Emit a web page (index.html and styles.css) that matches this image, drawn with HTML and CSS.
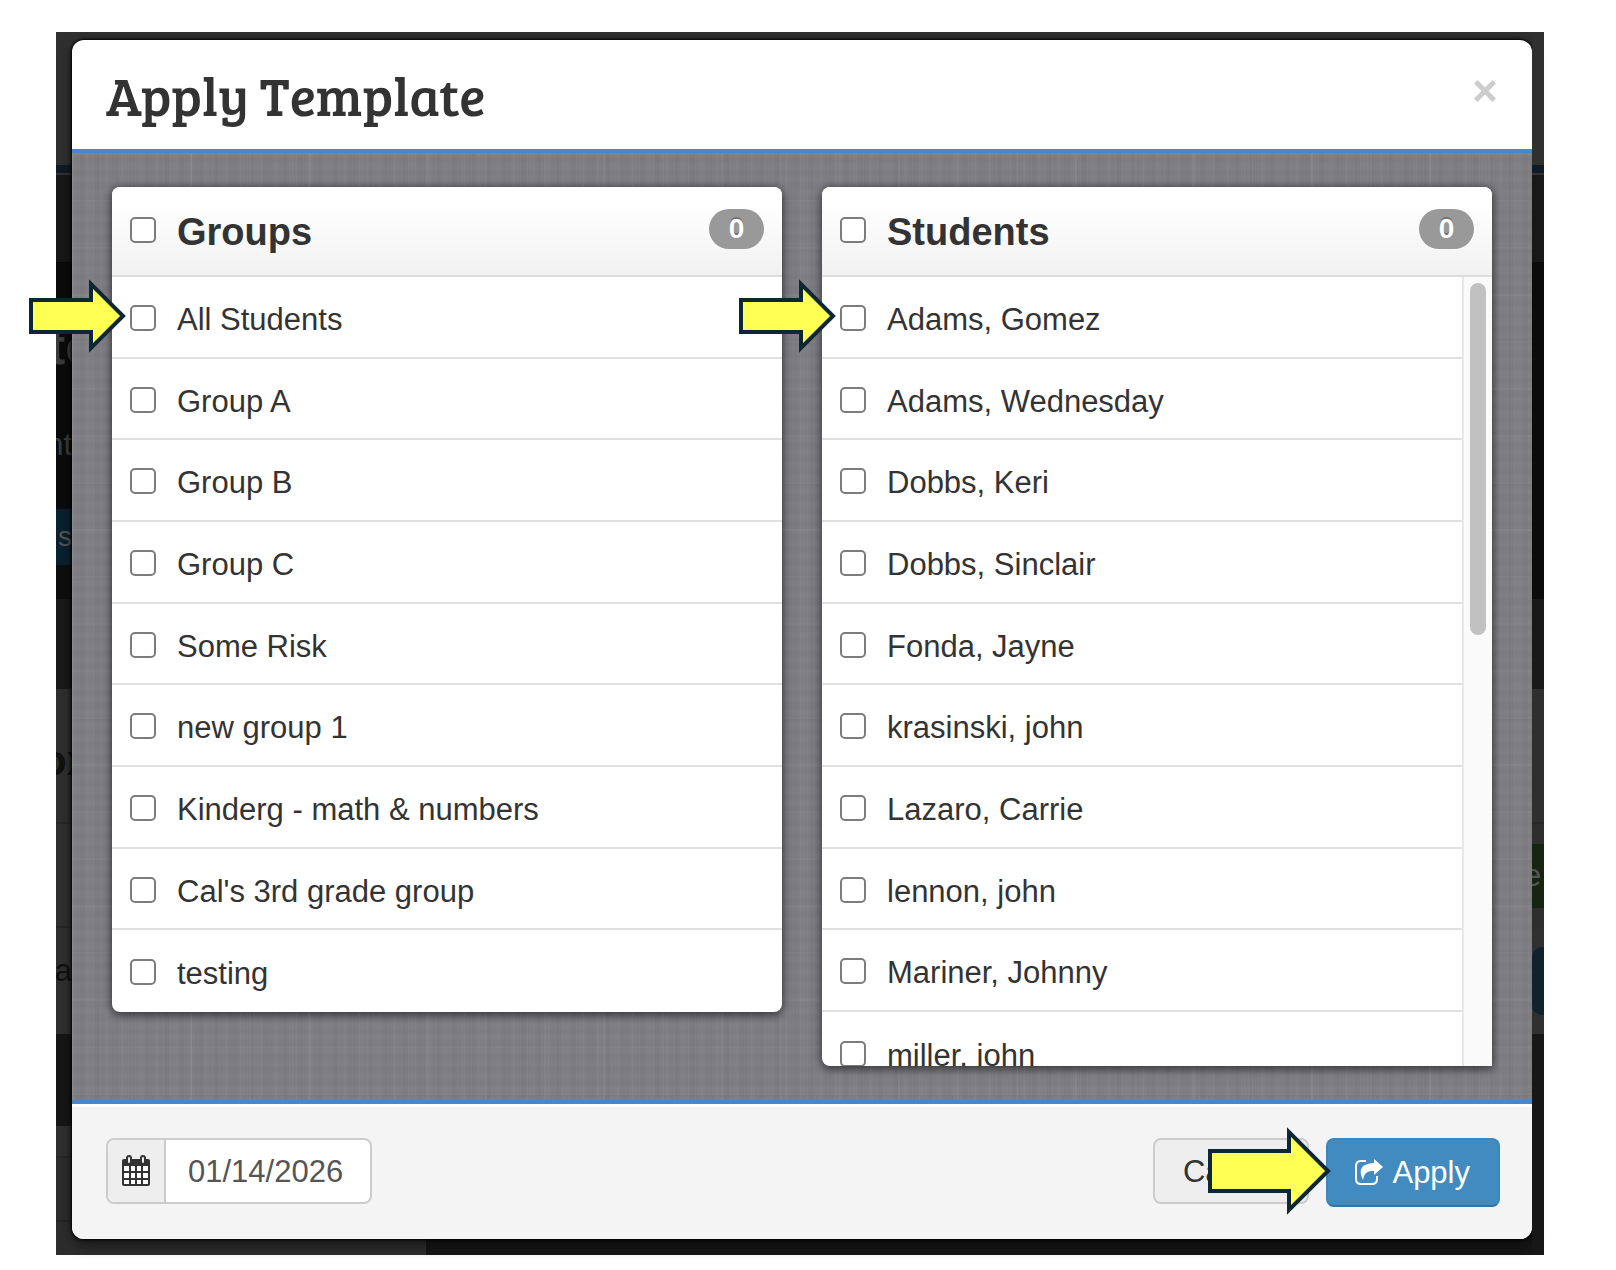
FILE: index.html
```html
<!DOCTYPE html>
<html lang="en">
<head>
  <meta charset="utf-8">
  <title>Apply Template</title>
  <link rel="stylesheet" href="styles.css">
</head>
<body>
  <div class="stage">
    <!-- dimmed page edges showing on both sides of the dialog -->
    <div class="edge edge-left" aria-hidden="true">
      <div class="strip strip-nav"></div>
      <div class="strip strip-rule"></div>
      <div class="strip strip-head"></div>
      <div class="strip strip-title">tc</div>
      <div class="strip strip-sub">nt</div>
      <div class="strip strip-btn">s</div>
      <div class="strip strip-gap"></div>
      <div class="strip strip-mid"></div>
      <div class="strip strip-box">ox</div>
      <div class="strip strip-row"></div>
      <div class="strip strip-cell">a</div>
      <div class="strip strip-dark"></div>
      <div class="strip strip-cap"></div>
      <div class="strip strip-list"></div>
      <div class="strip strip-last"></div>
    </div>

    <div class="modal" role="dialog" aria-labelledby="modalTitle">
      <div class="modal-header">
        <h1 id="modalTitle">Apply Template</h1>
        <button type="button" class="close" aria-label="Close">
          <svg width="22" height="22" viewBox="0 0 22 22"><path d="M3.500 3.500L18.500 18.500M18.500 3.500L3.500 18.500" stroke="#ccc" stroke-width="5" stroke-linecap="square"/></svg>
        </button>
      </div>

      <div class="modal-body">
        <div class="panel">
          <label class="panel-head">
            <input type="checkbox">
            <span class="name">Groups</span>
            <span class="badge">0</span>
          </label>
          <div class="list">
            <label class="row"><input type="checkbox">All Students</label>
            <label class="row"><input type="checkbox">Group A</label>
            <label class="row"><input type="checkbox">Group B</label>
            <label class="row"><input type="checkbox">Group C</label>
            <label class="row"><input type="checkbox">Some Risk</label>
            <label class="row"><input type="checkbox">new group 1</label>
            <label class="row"><input type="checkbox">Kinderg - math &amp; numbers</label>
            <label class="row"><input type="checkbox">Cal's 3rd grade group</label>
            <label class="row"><input type="checkbox">testing</label>
          </div>
          <svg class="arrow arrow-row" width="98" height="74" viewBox="0 0 98 74"><path d="M2 21H62V5L94 37L62 69V53H2Z"/></svg>
        </div>

        <div class="panel panel-scroll">
          <label class="panel-head">
            <input type="checkbox">
            <span class="name">Students</span>
            <span class="badge">0</span>
          </label>
          <div class="scroller">
            <div class="list">
              <label class="row"><input type="checkbox">Adams, Gomez</label>
              <label class="row"><input type="checkbox">Adams, Wednesday</label>
              <label class="row"><input type="checkbox">Dobbs, Keri</label>
              <label class="row"><input type="checkbox">Dobbs, Sinclair</label>
              <label class="row"><input type="checkbox">Fonda, Jayne</label>
              <label class="row"><input type="checkbox">krasinski, john</label>
              <label class="row"><input type="checkbox">Lazaro, Carrie</label>
              <label class="row"><input type="checkbox">lennon, john</label>
              <label class="row"><input type="checkbox">Mariner, Johnny</label>
              <label class="row"><input type="checkbox">miller, john</label>
            </div>
            <div class="track"><div class="thumb"></div></div>
          </div>
          <svg class="arrow arrow-row" width="98" height="74" viewBox="0 0 98 74"><path d="M2 21H62V5L94 37L62 69V53H2Z"/></svg>
        </div>
      </div>

      <div class="modal-footer">
        <div class="date">
          <label class="date-icon" for="date" aria-label="Date">
            <svg width="30" height="32" viewBox="0 0 30 32">
              <path d="M1 6Q1 4 3 4H27Q29 4 29 6V29Q29 31 27 31H3Q1 31 1 29Z" fill="#333"/>
              <path d="M3 11H8V16H3ZM10 11H14V16H10ZM16 11H20V16H16ZM22 11H27V16H22ZM3 18H8V23H3ZM10 18H14V23H10ZM16 18H20V23H16ZM22 18H27V23H22ZM3 25H8V29H3ZM10 25H14V29H10ZM16 25H20V29H16ZM22 25H27V29H22Z" fill="#fff"/>
              <rect x="6" y="1" width="4" height="8" rx="2" fill="#eee" stroke="#333" stroke-width="2"/>
              <rect x="20" y="1" width="4" height="8" rx="2" fill="#eee" stroke="#333" stroke-width="2"/>
            </svg>
          </label>
          <input type="text" id="date" value="01/14/2026">
        </div>
        <div class="actions">
          <button type="button" class="btn">Cancel</button>
          <div class="apply-wrap">
            <button type="button" class="btn btn-primary">
              <svg width="30" height="28" viewBox="0 0 30 28">
                <path d="M12 2H7Q2 2 2 7V20Q2 25 7 25H18Q23 25 23 20V17" fill="none" stroke="#fff" stroke-width="2"/>
                <path d="M20 0L29 8L20 16V12Q10 11 9 21Q1 5 20 4Z" fill="#fff"/>
              </svg>
              Apply
            </button>
            <svg class="arrow arrow-apply" width="124" height="88" viewBox="0 0 124 88"><path d="M2 24H81V5L120 44L81 83V64H2Z"/></svg>
          </div>
        </div>
      </div>
    </div>

    <div class="edge edge-right" aria-hidden="true">
      <div class="strip strip-nav"></div>
      <div class="strip strip-rule"></div>
      <div class="strip strip-head"></div>
      <div class="strip strip-black"></div>
      <div class="strip strip-mid"></div>
      <div class="strip strip-box"></div>
      <div class="strip strip-thin"></div>
      <div class="strip strip-green">e</div>
      <div class="strip strip-thin"></div>
      <div class="strip strip-cell"><div class="pill"></div></div>
      <div class="strip strip-end"></div>
    </div>
  </div>
</body>
</html>
```
FILE: styles.css
```css
* {
  box-sizing: border-box;
}
body {
  margin: 0;
  padding: 32px 72px 15px 56px;
  background-color: #fff;
  font: 31px/40px "Liberation Sans", Arial, sans-serif;
  color: #333;
}
.stage {
  position: relative;
  display: grid;
  grid-template-columns: 16px 1fr 12px;
  background: linear-gradient(to right, #2d2d2d 370px, #161616 370px) bottom / 100% 40px no-repeat, #303030;
}

/* dimmed page edges */
.edge {
  display: flex;
  flex-direction: column;
  overflow: hidden;
}
.strip {
  display: flex;
  flex-shrink: 0;
  align-items: center;
  justify-content: flex-end;
  color: #3c3c3c;
}
.strip-nav {
  height: 133px;
  background-color: #303030;
}
.strip-rule {
  height: 10px;
  background-color: #0f1b27;
  border-bottom: 2px solid #333;
}
.strip-head {
  height: 87px;
  background-color: #181818;
}
.strip-title {
  justify-content: flex-start;
  height: 148px;
  padding-top: 20px;
  background-color: #0b0b0b;
  font-size: 52px;
  font-weight: bold;
  text-indent: -8px;
}
.strip-sub {
  height: 99px;
  padding-bottom: 30px;
  background-color: #0b0b0b;
}
.strip-btn {
  height: 56px;
  background-color: #0a2130;
  font-size: 28px;
  color: #555;
}
.strip-gap {
  height: 34px;
  background-color: #0e0e0e;
}
.strip-black {
  height: 337px;
  background-color: #0b0b0b;
}
.strip-mid {
  height: 90px;
  background-color: #191919;
}
.strip-box {
  justify-content: flex-start;
  height: 135px;
  padding-top: 10px;
  background-color: #2f2f2f;
  border-bottom: 2px solid #272727;
  font-size: 42px;
  font-weight: bold;
  text-indent: -15px;
  color: #111;
}
.strip-row {
  height: 104px;
  background-color: #303030;
  border-bottom: 2px solid #272727;
}
.strip-cell {
  height: 106px;
  background-color: #303030;
  color: #111;
}
.edge-left .strip-cell {
  padding-bottom: 20px;
}
.strip-dark {
  height: 92px;
  background-color: #161616;
}
.strip-cap {
  height: 32px;
  background-color: #303030;
  border-bottom: 2px solid #272727;
}
.strip-list {
  height: 64px;
  background-color: #2d2d2d;
  border-bottom: 2px solid #252525;
}
.strip-last {
  flex: 1;
  background-color: #2d2d2d;
}
.edge-right .strip {
  justify-content: flex-start;
}
.strip-thin {
  height: 20px;
  background-color: #2e2e2e;
}
.strip-green {
  height: 64px;
  background-color: #16250f;
  color: #555;
  text-indent: -8px;
}
.strip-end {
  flex: 1;
  background-color: #171717;
}
.pill {
  width: 40px;
  height: 68px;
  flex-shrink: 0;
  border-radius: 10px;
  background-color: #12222c;
}

/* dialog */
.modal {
  display: flex;
  flex-direction: column;
  margin: 8px 0 16px;
  border-radius: 12px;
  background-color: #fff;
  box-shadow: 0 0 3px 1px #000, 0 6px 14px rgba(0, 0, 0, .5);
}
.modal-header {
  display: flex;
  align-items: center;
  justify-content: space-between;
  height: 113px;
  padding: 0 36px 0 34px;
  border-bottom: 4px solid #4a86cb;
}
.modal-header h1 {
  margin: 0;
  font: normal 54px/60px "Bree Serif", "DejaVu Serif Condensed", "DejaVu Serif", serif;
  color: #333;
}
.close {
  display: flex;
  margin: 0 0 8px;
  padding: 0;
  border: 0;
  background: none;
}
.modal-body {
  display: grid;
  grid-template-columns: 1fr 1fr;
  gap: 40px;
  align-items: start;
  padding: 34px 40px;
  background-color: #828186;
  background-image:
    repeating-linear-gradient(to right, rgba(255, 255, 255, .03) 0 1px, transparent 1px 7px),
    repeating-linear-gradient(to right, transparent 0, rgba(0, 0, 0, .04) 9px, transparent 17px),
    repeating-linear-gradient(to right, rgba(255, 255, 255, .04) 0 2px, transparent 2px 59px),
    repeating-linear-gradient(to bottom, transparent 0, rgba(0, 0, 0, .03) 7px, transparent 13px),
    repeating-linear-gradient(to bottom, rgba(255, 255, 255, .03) 0 2px, transparent 2px 47px);
}
.panel {
  position: relative;
  border-radius: 8px;
  background-color: #fff;
  box-shadow: 0 2px 10px 1px rgba(0, 0, 0, .6);
}
.panel-scroll {
  border-radius: 8px 8px 0 8px;
}
.panel-head {
  display: flex;
  align-items: center;
  height: 90px;
  padding: 2px 18px 0;
  border-bottom: 2px solid #ddd;
  border-radius: 8px 8px 0 0;
  background-image: linear-gradient(#fff 20%, #f1f1f1);
}
.name {
  flex: 1;
  font-size: 38px;
  font-weight: bold;
}
.badge {
  width: 55px;
  margin-bottom: 6px;
  border-radius: 20px;
  background-color: #999;
  color: #fff;
  font-size: 28px;
  font-weight: bold;
  text-align: center;
  text-shadow: 0 -2px 0 rgba(0, 0, 0, .25);
}
input[type="checkbox"] {
  appearance: none;
  flex-shrink: 0;
  width: 26px;
  height: 26px;
  margin: 0 21px 4px 0;
  border: 2px solid #7c7c7c;
  border-radius: 5px;
  background-color: #fff;
}
.row {
  display: flex;
  align-items: center;
  height: 82px;
  padding: 6px 18px 0;
  border-bottom: 2px solid #e0e0e0;
}
.row:nth-child(3n+2) {
  height: 81px;
}
.row:last-child {
  border-bottom: 0;
}
.scroller {
  display: flex;
  height: 789px;
  overflow: hidden;
  border-radius: 0 0 0 8px;
}
.scroller .list {
  flex: 1;
}
.track {
  width: 30px;
  padding: 6px;
  border-left: 2px solid #e8e8e8;
  background-color: #fafafa;
}
.thumb {
  width: 16px;
  height: 352px;
  border-radius: 8px;
  background-color: #c1c1c1;
}

.modal-footer {
  display: flex;
  align-items: flex-start;
  justify-content: space-between;
  padding: 34px 32px 32px 34px;
  border-top: 4px solid #4a86cb;
  border-radius: 0 0 12px 12px;
  background-color: #f4f4f4;
  box-shadow: inset 0 3px 0 #fff;
}
.date {
  display: flex;
  width: 266px;
  height: 66px;
  border: 2px solid #ccc;
  border-radius: 8px;
  background-color: #fff;
  overflow: hidden;
}
.date-icon {
  display: flex;
  align-items: center;
  justify-content: center;
  width: 58px;
  border-right: 2px solid #ccc;
  background-color: #eee;
}
.date input {
  flex: 1;
  min-width: 0;
  padding: 2px 22px 0;
  border: 0;
  background: none;
  font: inherit;
  color: #555;
}
.actions {
  display: flex;
  gap: 17px;
}
.btn {
  display: flex;
  align-items: center;
  gap: 8px;
  height: 66px;
  padding: 2px 28px 0;
  border: 2px solid #ccc;
  border-radius: 8px;
  background-color: #eee;
  font: inherit;
  color: #333;
}
.btn-primary {
  height: 69px;
  padding: 0 28px 0 26px;
  border-color: #3a87bd #3a87bd #2f73a3;
  background-color: #428bc0;
  color: #fff;
}

/* yellow pointers over the dialog */
.apply-wrap {
  position: relative;
}
.arrow {
  position: absolute;
  fill: #ffff54;
  stroke: #0e2735;
  stroke-width: 4;
}
.arrow-row {
  left: -83px;
  top: 92px;
}
.arrow-apply {
  right: calc(100% - 6px);
  top: -11px;
}
```
